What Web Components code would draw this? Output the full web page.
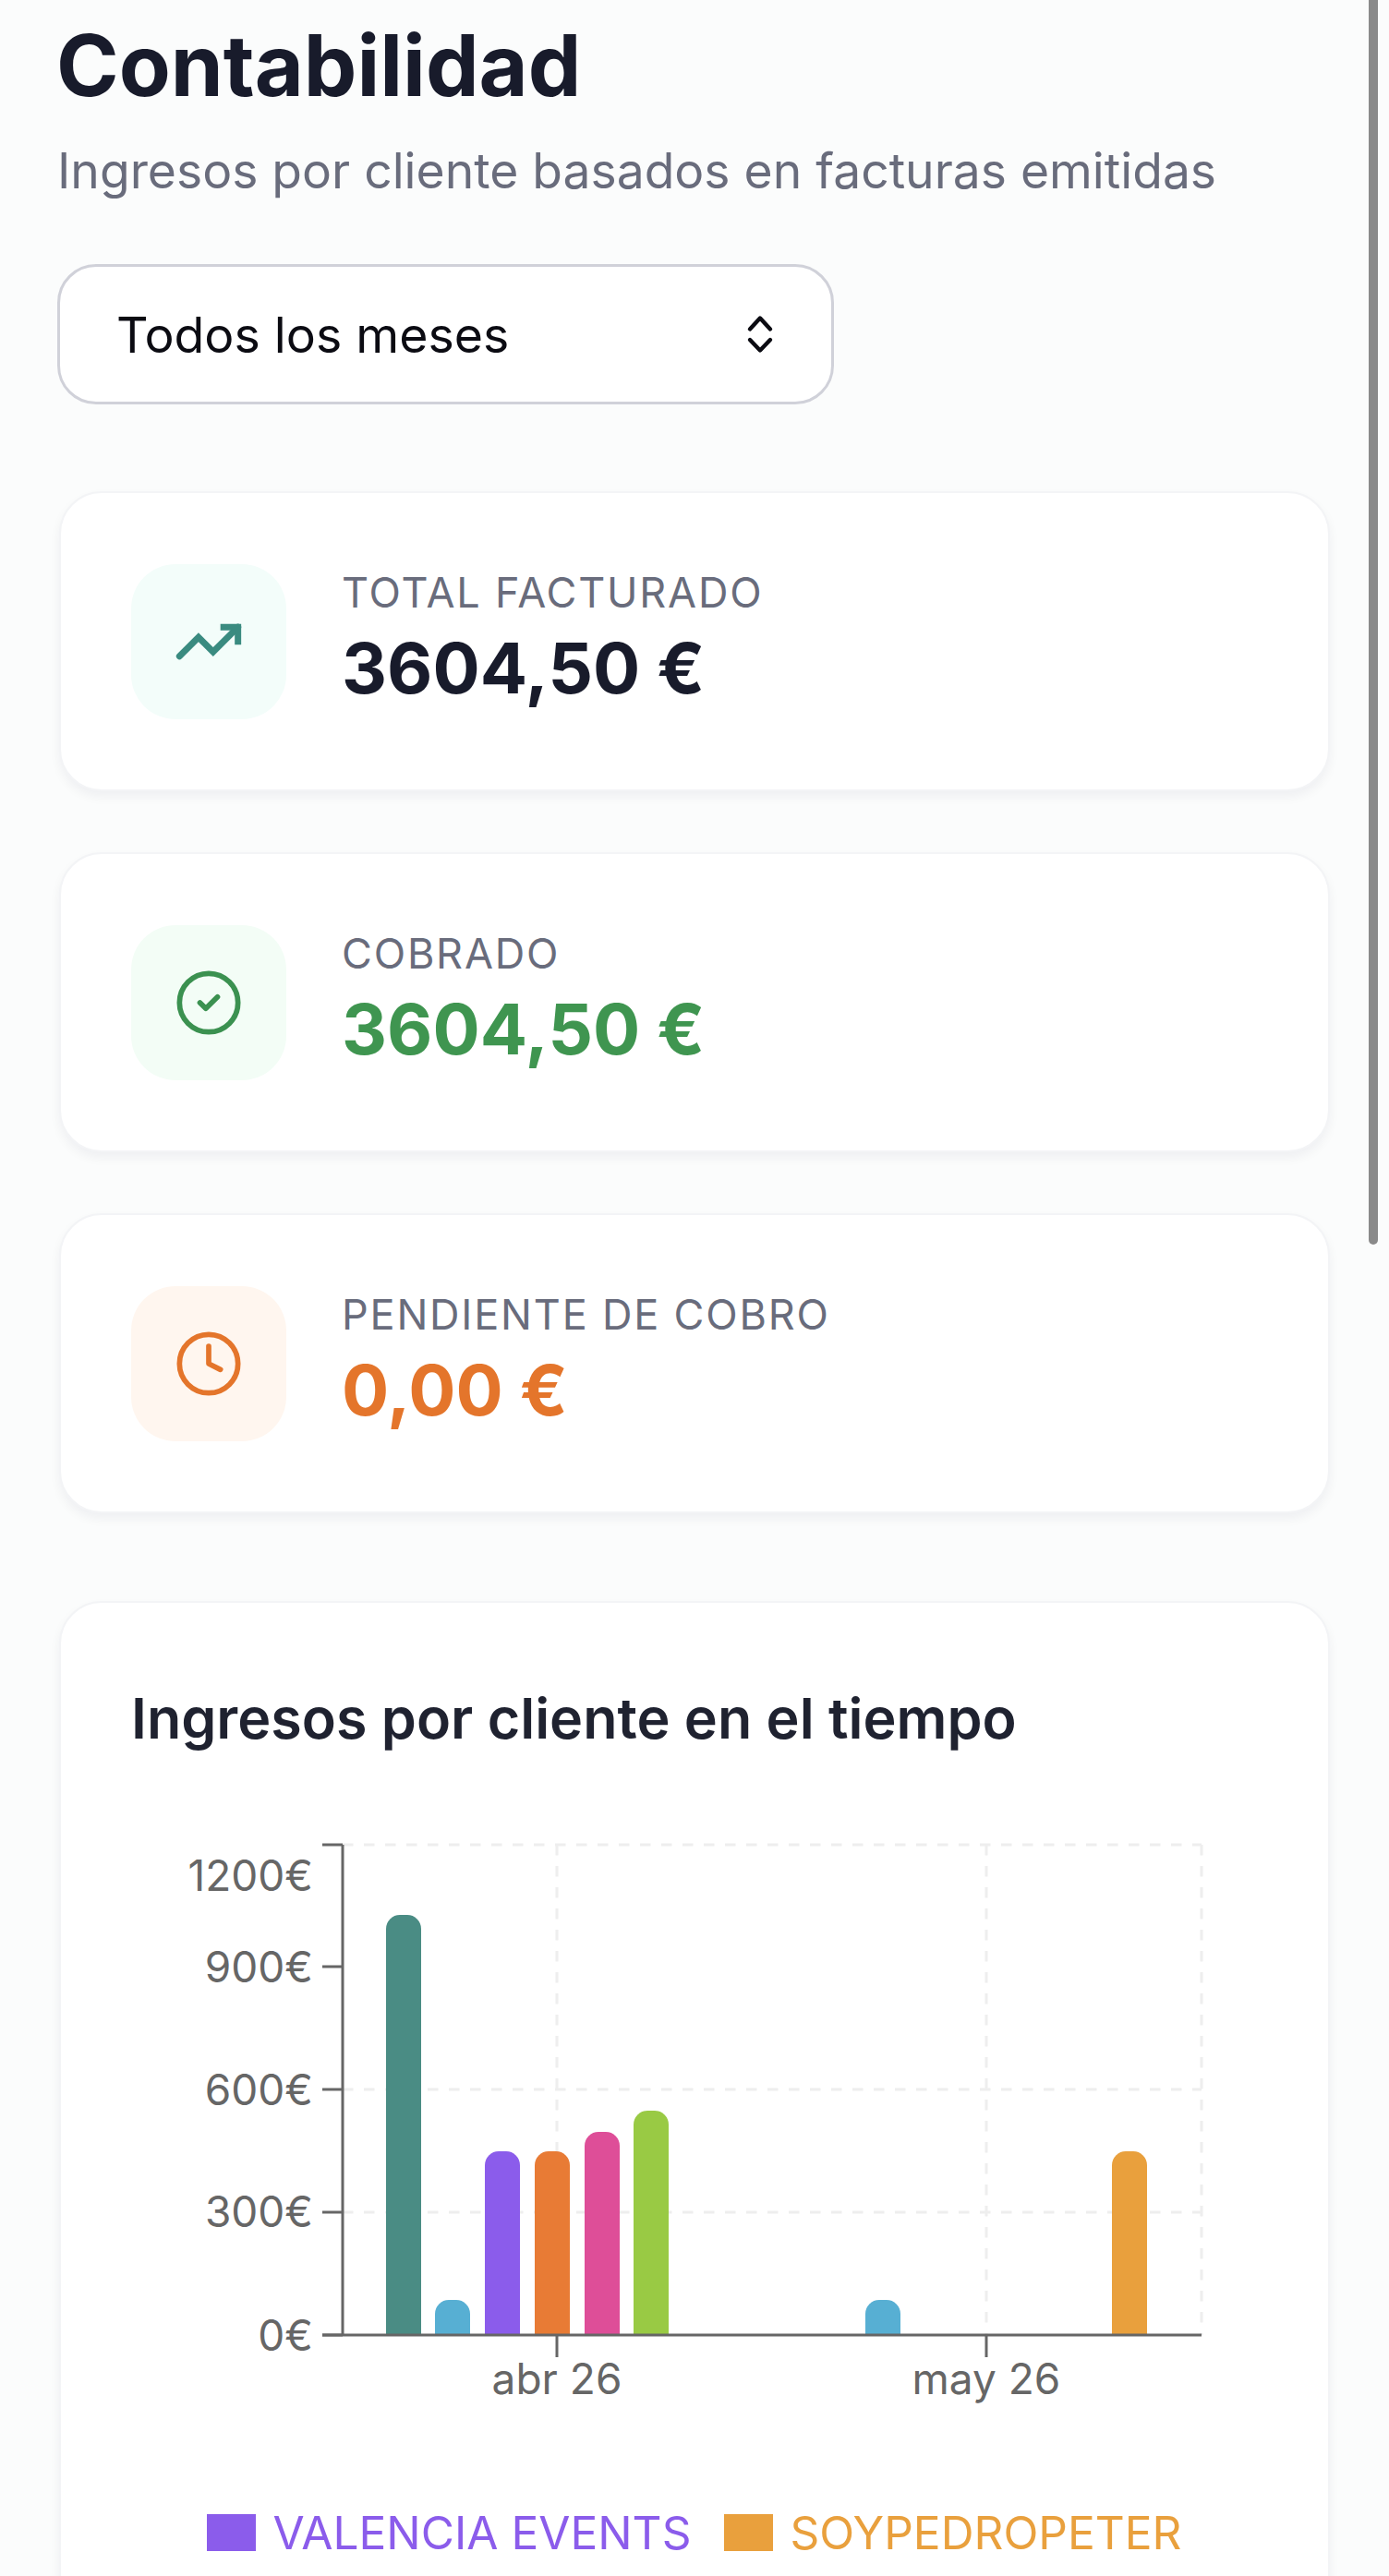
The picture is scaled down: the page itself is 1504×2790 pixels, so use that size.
<!DOCTYPE html>
<html lang="es">
<head>
<meta charset="utf-8">
<title>Contabilidad</title>
<style>
  html, body { margin: 0; height: 2790px; overflow: hidden; background: #fbfcfc; }
  body { font-family: Inter, "Liberation Sans", sans-serif; }
</style>
</head>
<body>
<contabilidad-page>
  <page-header title="Contabilidad" subtitle="Ingresos por cliente basados en facturas emitidas"></page-header>
  <month-select value="Todos los meses"></month-select>
  <stat-card icon="trend" tone="teal" label="TOTAL FACTURADO" value="3604,50 €"></stat-card>
  <stat-card icon="check" tone="green" label="COBRADO" value="3604,50 €"></stat-card>
  <stat-card icon="clock" tone="orange" label="PENDIENTE DE COBRO" value="0,00 €"></stat-card>
  <income-chart title="Ingresos por cliente en el tiempo"></income-chart>
</contabilidad-page>

<script>
class ContabilidadPage extends HTMLElement {
  constructor() {
    super();
    this.shadowDom = this.attachShadow({ mode: "open" });
    this.shadowDom.innerHTML = `
    <style>
    :host{
        display: block;
        position: relative;
        box-sizing: border-box;
        width: 1504px;
        height: 2790px;
        overflow: hidden;
        padding: 0 64px;
        background: #fbfcfc;
    }
    .scrollbar{
        position: absolute;
        top: 0;
        right: 12px;
        width: 10px;
        height: 1348px;
        border-radius: 0 0 5px 5px;
        background: #8a8a8a;
    }
    </style>
    <slot></slot>
    <div class="scrollbar"></div>`;
  }
}

class PageHeader extends HTMLElement {
  constructor() {
    super();
    this.shadowDom = this.attachShadow({ mode: "open" });
  }

  connectedCallback() {
    this.shadowDom.innerHTML = `
    <style>
    :host{
        display: block;
        padding-top: 18px;
    }
    h1{
        margin: 0 0 0 -3px;
        font-size: 91.5px;
        line-height: 106px;
        font-weight: 700;
        color: #181b2b;
    }
    p{
        margin: 31px 0 0 -2px;
        font-size: 53.4px;
        line-height: 60px;
        font-weight: 400;
        color: #696c7c;
    }
    </style>
    <h1>${this.getAttribute("title")}</h1>
    <p>${this.getAttribute("subtitle")}</p>`;
  }
}

class MonthSelect extends HTMLElement {
  constructor() {
    super();
    this.shadowDom = this.attachShadow({ mode: "open" });
  }

  connectedCallback() {
    this.shadowDom.innerHTML = `
    <style>
    :host{
        display: block;
        margin-top: 71px;
        margin-bottom: 94px;
    }
    .box{
        box-sizing: border-box;
        width: 841px;
        height: 152px;
        margin-left: -2px;
        display: flex;
        align-items: center;
        justify-content: space-between;
        padding: 0 62px 0 61px;
        background: #fff;
        border: 3.5px solid #d0d1d9;
        border-radius: 42px;
        font-size: 53.6px;
        color: #0b0b12;
    }
    svg{
        width: 30px;
        height: 42px;
    }
    </style>
    <div class="box">
      <span>${this.getAttribute("value")}</span>
      <svg viewBox="0 0 30 42" fill="none" stroke="#0b0b12" stroke-width="4.4" stroke-linecap="round" stroke-linejoin="round">
        <path d="M4 15.5 15 3.5l11 12"/>
        <path d="M4 27l11 11.5L26 27"/>
      </svg>
    </div>`;
  }
}

const statIcons = {
  trend: `<path d="M22 7 13.5 15.5 8.5 10.5 2 17" stroke-width="2.2" stroke-linecap="round"/><path d="M16 7h6v6" stroke-width="2.2"/>`,
  check: `<circle cx="12" cy="12" r="10"/><path d="m9 12 2 2 4-4" stroke-linecap="round" stroke-linejoin="round"/>`,
  clock: `<circle cx="12" cy="12" r="10"/><path d="M12 6v6l4 2" stroke-linecap="round" stroke-linejoin="round"/>`,
};

const statTones = {
  teal: { bg: "#f3fdfa", icon: "#3a8b80", value: "#181b2b" },
  green: { bg: "#f3fdf6", icon: "#3b9150", value: "#3f9550" },
  orange: { bg: "#fff6ef", icon: "#e4752b", value: "#e4752b" },
};

class StatCard extends HTMLElement {
  constructor() {
    super();
    this.shadowDom = this.attachShadow({ mode: "open" });
  }

  connectedCallback() {
    const tone = statTones[this.getAttribute("tone")];
    this.shadowDom.innerHTML = `
    <style>
    :host{
        display: block;
        margin-bottom: 66px;
    }
    .card{
        box-sizing: border-box;
        height: 325px;
        display: flex;
        align-items: center;
        gap: 60px;
        padding: 0 76px;
        background: #fff;
        border: 2px solid #f3f4f6;
        border-radius: 46px;
        box-shadow: 0 6px 12px rgba(20, 24, 50, 0.05);
    }
    .icon{
        flex: none;
        width: 168px;
        height: 168px;
        display: flex;
        align-items: center;
        justify-content: center;
        border-radius: 48px;
        background: ${tone.bg};
    }
    svg{
        width: 76px;
        height: 76px;
    }
    .text{
        padding-bottom: 5px;
    }
    .label{
        font-size: 45px;
        line-height: 50px;
        letter-spacing: 1.8px;
        color: #696c7c;
    }
    .value{
        margin-top: 11px;
        font-size: 76px;
        line-height: 90px;
        font-weight: 700;
        color: ${tone.value};
    }
    </style>
    <div class="card">
      <div class="icon">
        <svg viewBox="0 0 24 24" fill="none" stroke="${tone.icon}" stroke-width="1.8">${statIcons[this.getAttribute("icon")]}</svg>
      </div>
      <div class="text">
        <div class="label">${this.getAttribute("label")}</div>
        <div class="value">${this.getAttribute("value")}</div>
      </div>
    </div>`;
  }
}

// coordinates of the plot, relative to the svg box
const AXIS_X = 229;
const RIGHT_X = 1159;
const TOP_Y = 8;
const BASE_Y = 539;
const BAR_W = 38;

const ingresos = [
  { x: 276, top: 84, color: "#4a8c84" },
  { x: 329, top: 501, color: "#57afd3" },
  { x: 383, top: 340, color: "#8b5ceb" },
  { x: 437, top: 340, color: "#e87b35" },
  { x: 491, top: 319, color: "#de4e98" },
  { x: 544, top: 296, color: "#99ca44" },
  { x: 795, top: 501, color: "#57afd3" },
  { x: 1062, top: 340, color: "#e9a03d" },
];

const yTicks = [
  { label: "1200€", tick: 8, text: 42 },
  { label: "900€", tick: 140, text: 141 },
  { label: "600€", tick: 273, text: 274 },
  { label: "300€", tick: 406, text: 406 },
  { label: "0€", tick: 539, text: 540 },
];

class IncomeChart extends HTMLElement {
  constructor() {
    super();
    this.shadowDom = this.attachShadow({ mode: "open" });
  }

  connectedCallback() {
    const grid = [TOP_Y, 273, 406]
      .map((y) => `<line x1="${AXIS_X}" x2="${RIGHT_X}" y1="${y}" y2="${y}"/>`)
      .concat([461, 926, RIGHT_X].map((x) => `<line x1="${x}" x2="${x}" y1="${TOP_Y}" y2="${BASE_Y}"/>`))
      .join("");

    const bars = ingresos
      .map((b) => {
        const r = 15;
        return `<path fill="${b.color}" d="M${b.x} ${BASE_Y}V${b.top + r}a${r} ${r} 0 0 1 ${r}-${r}h${BAR_W - 2 * r}a${r} ${r} 0 0 1 ${r} ${r}V${BASE_Y}z"/>`;
      })
      .join("");

    const ticks = yTicks
      .map((t) => `<line x1="207" x2="${AXIS_X}" y1="${t.tick}" y2="${t.tick}"/>`)
      .join("");

    const yLabels = yTicks
      .map((t) => `<text x="197" y="${t.text + 16}" text-anchor="end">${t.label}</text>`)
      .join("");

    this.shadowDom.innerHTML = `
    <style>
    :host{
        display: block;
        margin-top: 95px;
    }
    .card{
        box-sizing: border-box;
        height: 1100px;
        padding: 0 76px;
        background: #fff;
        border: 2px solid #f3f4f6;
        border-radius: 46px;
        box-shadow: 0 6px 12px rgba(20, 24, 50, 0.05);
    }
    h2{
        margin: 0;
        padding-top: 90px;
        font-size: 61px;
        line-height: 70px;
        font-weight: 600;
        color: #1f2230;
    }
    svg{
        display: block;
        margin-top: 94px;
        width: 1220px;
        height: 640px;
    }
    text{
        font-family: Inter, "Liberation Sans", sans-serif;
        font-size: 46px;
        fill: #666;
    }
    .grid line{
        stroke: #eeeeee;
        stroke-width: 3;
        stroke-dasharray: 11.5 11.5;
    }
    .axis line{
        stroke: #666;
        stroke-width: 3;
    }
    .legend{
        display: flex;
        justify-content: center;
        align-items: center;
        gap: 36px;
        margin-top: 83px;
        font-size: 49.6px;
        line-height: 60px;
    }
    .legend span{
        display: flex;
        align-items: center;
        gap: 18px;
    }
    .legend i{
        width: 53px;
        height: 40px;
    }
    </style>
    <div class="card">
      <h2>${this.getAttribute("title")}</h2>
      <svg viewBox="0 0 1220 640">
        <g class="grid">${grid}</g>
        ${bars}
        <g class="axis">
          ${ticks}
          <line x1="${AXIS_X}" x2="${AXIS_X}" y1="${TOP_Y}" y2="${BASE_Y}"/>
          <line x1="207" x2="${RIGHT_X}" y1="${BASE_Y}" y2="${BASE_Y}"/>
          <line x1="461" x2="461" y1="${BASE_Y}" y2="563"/>
          <line x1="926" x2="926" y1="${BASE_Y}" y2="563"/>
        </g>
        ${yLabels}
        <text x="461" y="603" text-anchor="middle">abr 26</text>
        <text x="926" y="603" text-anchor="middle">may 26</text>
      </svg>
      <div class="legend">
        <span style="color:#8b5ceb"><i style="background:#8b5ceb"></i>VALENCIA EVENTS</span>
        <span style="color:#e9a03d"><i style="background:#e9a03d"></i>SOYPEDROPETER</span>
      </div>
    </div>`;
  }
}

customElements.define("contabilidad-page", ContabilidadPage);
customElements.define("page-header", PageHeader);
customElements.define("month-select", MonthSelect);
customElements.define("stat-card", StatCard);
customElements.define("income-chart", IncomeChart);
</script>
</body>
</html>
